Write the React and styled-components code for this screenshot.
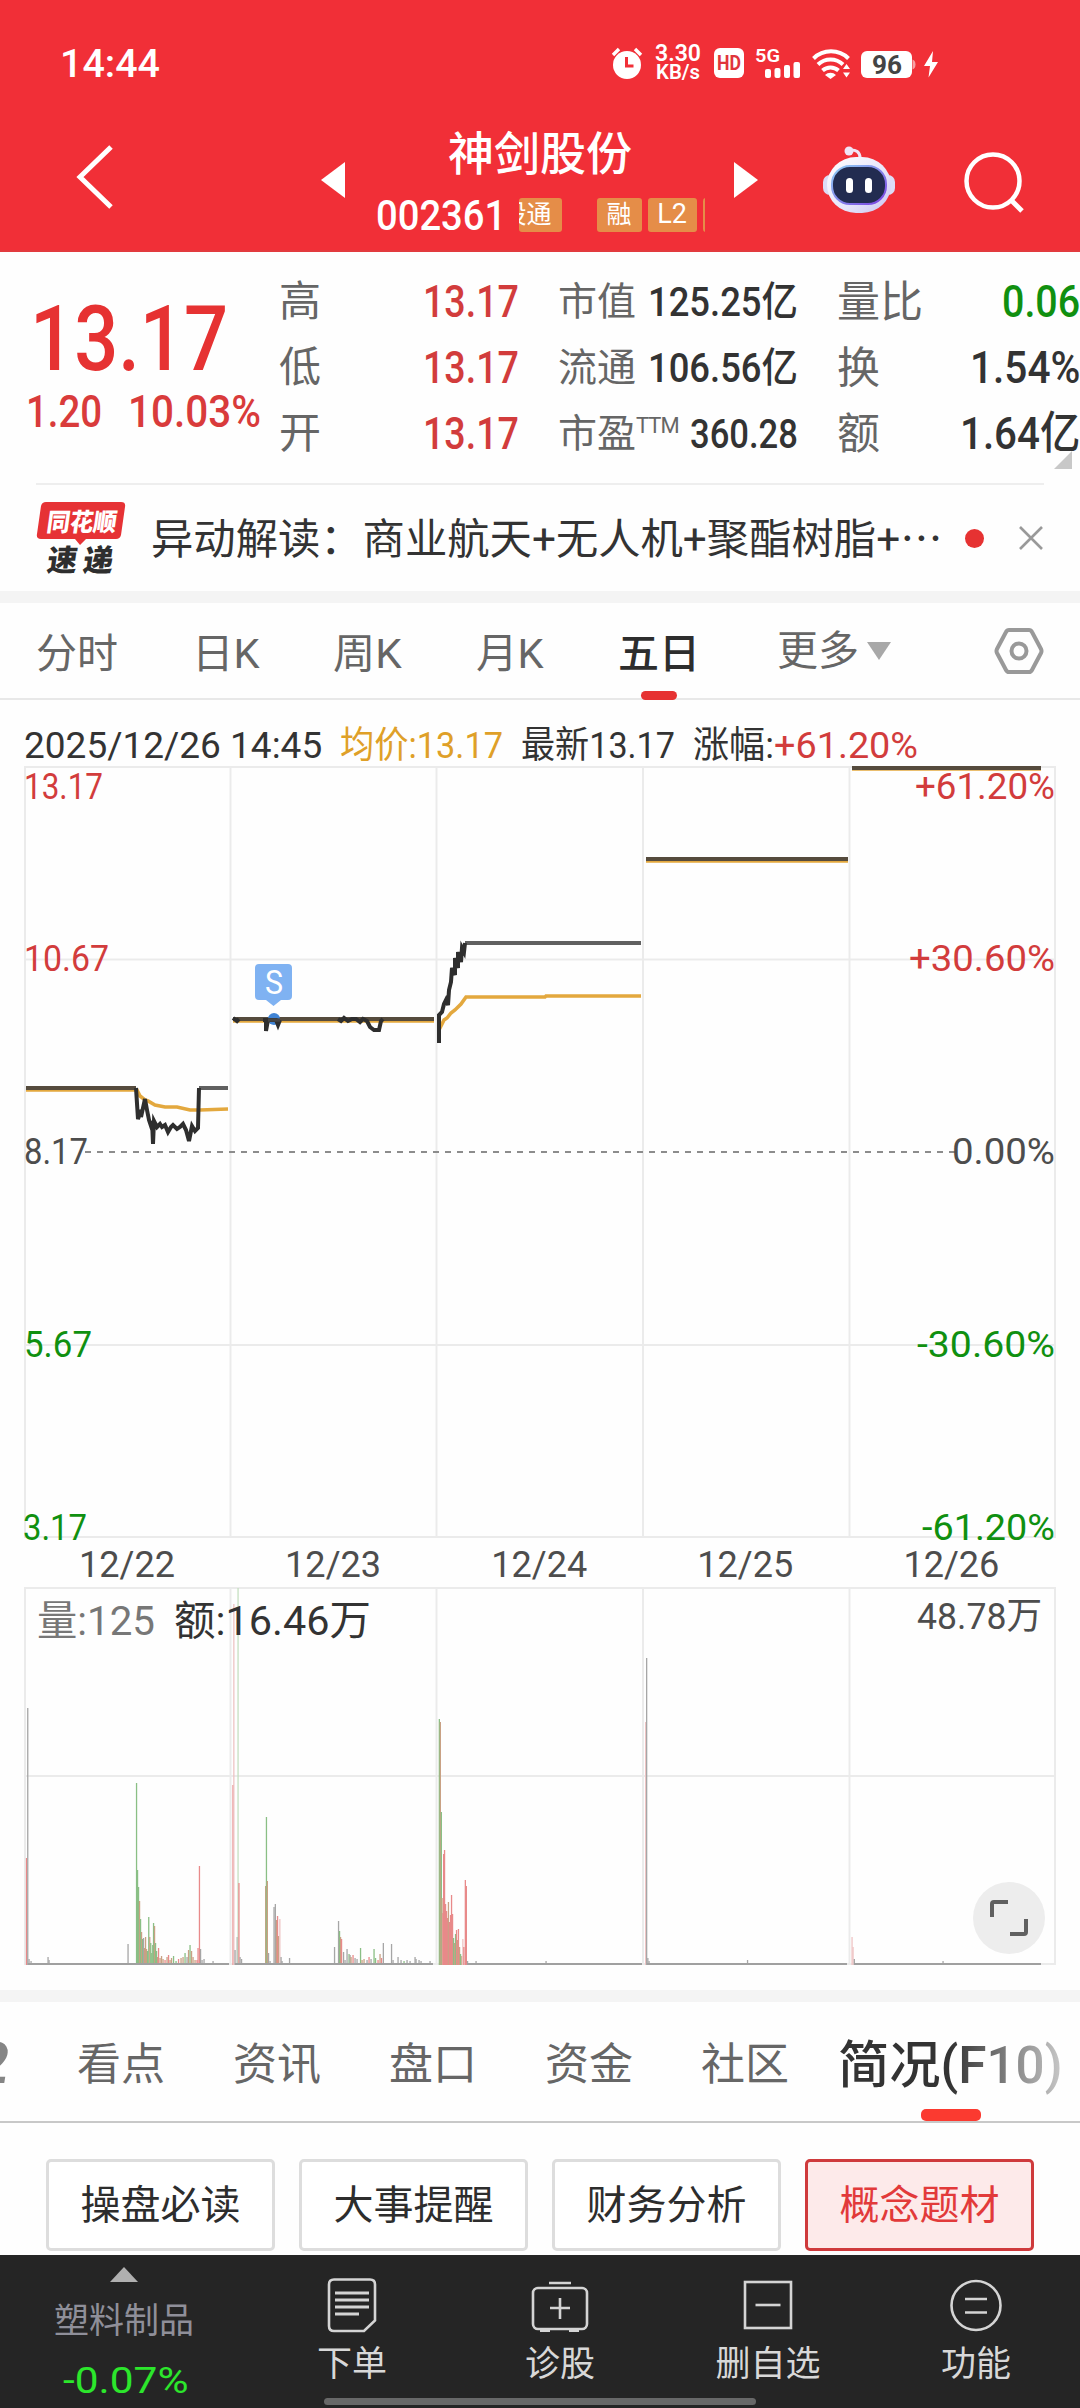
import React, {useState, useLayoutEffect, useRef} from 'react'
import styled, {createGlobalStyle} from 'styled-components';

const GlobalStyle = createGlobalStyle`
    body {
        margin: 0;
        background: #fff;
    }
    * {
        box-sizing: border-box;
    }
`;

const Page = styled.div`
    width: 1080px;
    height: 2408px;
    overflow: hidden;
    display: flex;
    flex-direction: column;
    font-family: Roboto, 'Noto Sans CJK SC', sans-serif;
    color: #333;
    background: #fefefe;
`;

const FitBox = styled.span`
    display: inline-block;
    flex: none;
    white-space: nowrap;
`;

const FitText = styled.span`
    display: inline-block;
    transform-origin: left center;
`;

// squeezes a text to a given width, the numbers use a narrow face
function Fit({ w, children }) {
    const ref = useRef(null);
    const [scale, setScale] = useState(1);

    useLayoutEffect(() => {
        setScale(w / ref.current.offsetWidth);
    }, [w, children])

    return (
        <FitBox style={{ width: w }}>
            <FitText ref={ref} style={{ transform: `scaleX(${scale})` }}>{children}</FitText>
        </FitBox>
    )
}

/* ---------- header ---------- */

const Header = styled.header`
    height: 252px;
    flex: none;
    background: #f12f37;
    border-bottom: 2px solid #e23a3e;
    color: #fff;
`;

const StatusBar = styled.div`
    height: 126px;
    padding: 0 140px 0 60px;
    display: flex;
    align-items: center;
    justify-content: space-between;
`;

const Clock = styled.div`
    font-size: 39px;
    font-weight: 500;
    line-height: 46px;
    padding-top: 2px;
`;

const StatusIcons = styled.svg`
    width: 332px;
    height: 44px;
    margin-bottom: 2px;
`;

const NavBar = styled.div`
    height: 124px;
    display: flex;
    align-items: center;
    padding-left: 73px;
`;

const NavIcon = styled.svg`
    flex: none;
    width: ${p => p.$w}px;
    height: ${p => p.$h}px;
    margin-left: ${p => p.$ml || 0}px;
    margin-top: ${p => p.$mt || 0}px;
`;

const TitleBlock = styled.div`
    width: 390px;
    height: 124px;
    display: flex;
    flex-direction: column;
    align-items: center;
`;

const StockName = styled.div`
    font-size: 46px;
    font-weight: 500;
    line-height: 56px;
    height: 66px;
`;

const CodeRow = styled.div`
    display: flex;
    align-items: center;
    gap: 13px;
    height: 48px;
    font-size: 42px;
    font-weight: 500;
    line-height: 48px;
`;

const TagStrip = styled.div`
    width: 186px;
    height: 34px;
    margin-bottom: 2px;
    display: flex;
    gap: 6px;
    overflow: hidden;
    justify-content: flex-start;
`;

const Tag = styled.span`
    flex: none;
    width: ${p => p.$w}px;
    height: 34px;
    margin-left: ${p => p.$ml || 0}px;
    padding-right: ${p => p.$pr || 0}px;
    border-radius: 3px;
    background: #e58d48;
    font-size: ${p => p.$size || 25}px;
    font-weight: 400;
    line-height: 33px;
    white-space: nowrap;
    display: flex;
    justify-content: ${p => p.$pr ? 'flex-end' : 'center'};
`;

/* ---------- quote ---------- */

const Quote = styled.section`
    flex: none;
    height: 231px;
    padding-top: 17px;
    display: grid;
    grid-template-columns: 240px 240px 240px 243px;
    column-gap: 39px;
    position: relative;
`;

const PriceBlock = styled.div`
    padding: 28px 0 0 26px;
    color: #d93b3b;
    font-weight: 500;
    white-space: nowrap;
`;

const Price = styled.div`
    padding-left: 4px;
    height: 83px;
    font-size: 91px;
    line-height: 84px;
    color: #e63232;
`;

const Change = styled.div`
    display: flex;
    gap: 26px;
    height: 64px;
    font-size: 45px;
    line-height: 64px;
`;

const QuoteCol = styled.div`
    display: flex;
    flex-direction: column;
`;

const QuoteItem = styled.div`
    height: 66px;
    display: flex;
    justify-content: space-between;
    align-items: center;
    line-height: 66px;
    color: #666;
    font-size: ${p => p.$label}px;
    white-space: nowrap;
`;

const Value = styled.span`
    font-size: ${p => p.$size}px;
    font-weight: 500;
    color: ${p => p.$color};
`;

const Sup = styled.sup`
    font-size: 22px;
    line-height: 0;
    letter-spacing: -1px;
    vertical-align: 14px;
`;

const Corner = styled.i`
    position: absolute;
    right: 8px;
    bottom: 14px;
    border-left: 18px solid transparent;
    border-bottom: 18px solid #c8c8c8;
`;

const News = styled.section`
    flex: none;
    height: 108px;
    margin: 0 36px;
    border-top: 2px solid #eee;
    display: flex;
    align-items: center;
`;

const NewsLogo = styled.svg`
    flex: none;
    width: 92px;
    height: 76px;
`;

const NewsText = styled.div`
    width: 793px;
    margin-left: 23px;
    font-size: 42px;
    line-height: 60px;
`;

const Dots = styled.span`
    font-family: 'Noto Sans CJK SC', sans-serif;
`;

const RedDot = styled.i`
    width: 19px;
    height: 19px;
    margin-left: 21px;
    border-radius: 50%;
    background: #e63232;
`;

const Band = styled.div`
    flex: none;
    height: 12px;
    background: #f4f4f4;
`;

/* ---------- chart ---------- */

const PeriodTabs = styled.nav`
    flex: none;
    height: 97px;
    padding: 0 36px;
    border-bottom: 2px solid #e8e8e8;
    display: flex;
`;

const PeriodTab = styled.div`
    position: relative;
    height: 97px;
    line-height: 102px;
    margin-right: ${p => p.$gap}px;
    font-size: 41px;
    white-space: nowrap;
    color: ${p => p.$on ? '#2d2d2d' : '#666'};
    font-weight: ${p => p.$on ? 500 : 400};
`;

const Underline = styled.i`
    position: absolute;
    left: 50%;
    bottom: ${p => p.$b}px;
    width: ${p => p.$w}px;
    height: ${p => p.$h}px;
    margin-left: ${p => -p.$w / 2}px;
    border-radius: 5px;
    background: ${p => p.$color};
`;

const More = styled.div`
    display: flex;
    align-items: center;
    gap: 8px;
    width: 218px;
    font-size: 41px;
    line-height: 102px;
    color: #666;
`;

const Down = styled.i`
    border: 12px solid transparent;
    border-top: 18px solid #a8a8a8;
    border-bottom: 0;
`;

const ChartInfo = styled.div`
    flex: none;
    height: 60px;
    padding: 16px 0 0 24px;
    display: flex;
    font-size: 37px;
    line-height: 60px;
    white-space: nowrap;
`;

const InfoPart = styled.span`
    margin-right: ${p => p.$gap || 0}px;
    color: ${p => p.$color || '#333'};
`;

const Chart = styled.svg`
    flex: none;
    display: block;
    width: 1080px;
    height: 1230px;
`;

/* ---------- bottom ---------- */

const SectionTabs = styled.nav`
    flex: none;
    height: 121px;
    border-bottom: 2px solid #c8c8c8;
    display: flex;
    position: relative;
`;

const Cut = styled.div`
    width: 9px;
    margin-right: 68px;
    display: flex;
    justify-content: flex-end;
    font-size: 58px;
    font-style: italic;
    font-weight: 700;
    line-height: 122px;
    color: #858585;
`;

const SectionTab = styled.div`
    width: 156px;
    font-size: 44px;
    line-height: 126px;
    color: #666;
`;

const ActiveTab = styled.div`
    position: relative;
    margin-left: -19px;
    font-size: 51px;
    font-weight: 500;
    line-height: 127px;
`;

const Fade = styled.div`
    position: absolute;
    right: 0;
    top: 0;
    width: 130px;
    height: 104px;
    background: linear-gradient(to right, rgba(254, 254, 254, 0), rgba(254, 254, 254, .85));
`;

const Chips = styled.div`
    flex: none;
    height: 132px;
    padding: 36px 46px 0;
    display: flex;
    justify-content: space-between;
`;

const Chip = styled.div`
    width: 229px;
    height: 92px;
    border: 3px solid ${p => p.$on ? '#cf3a3c' : '#ddd'};
    border-radius: 5px;
    background: ${p => p.$on ? '#fdeaea' : '#fff'};
    color: ${p => p.$on ? '#e23a3a' : '#2d2d2d'};
    font-size: 40px;
    line-height: 87px;
    text-align: center;
`;

const ToolBar = styled.footer`
    position: relative;
    flex: none;
    height: 153px;
    padding-left: 20px;
    background: #252525;
    display: flex;
    color: #d8d8d8;
    font-size: 35px;
`;

const Sector = styled.div`
    width: 208px;
    display: flex;
    flex-direction: column;
    align-items: center;
    color: #8f8f99;
    line-height: 50px;
`;

const Up = styled.i`
    border: 14px solid transparent;
    border-bottom: 15px solid #b0b0b0;
    border-top: 0;
    margin: 12px 0 15px;
`;

const SectorRate = styled.div`
    margin: 9px 0 0 2px;
    font-size: 37px;
    line-height: 50px;
    color: #2ce62c;
`;

const Tool = styled.div`
    width: 208px;
    margin-left: ${p => p.$ml || 0}px;
    padding-top: 20px;
    display: flex;
    flex-direction: column;
    align-items: center;
    line-height: 50px;
`;

const ToolIcon = styled.svg`
    width: 60px;
    height: 60px;
    margin-bottom: 5px;
    fill: none;
    stroke: #d4d4d4;
    stroke-width: 2.6;
`;

const HomeBar = styled.i`
    position: absolute;
    left: 324px;
    bottom: 3px;
    width: 432px;
    height: 7px;
    border-radius: 4px;
    background: #686868;
`;

const RED = '#d23c3c';
const GREEN = '#109010';

const quoteCols = [
    { label: 42, size: 45, items: [['高', '13.17', 96, RED], ['低', '13.17', 96, RED], ['开', '13.17', 96, RED]] },
    { label: 39, size: 41, items: [['市值', '125.25亿', 150, '#333'], ['流通', '106.56亿', 150, '#333'], ['市盈', '360.28', 108, '#333']] },
    { label: 43, size: 45, items: [['量比', '0.06', 78, GREEN], ['换', '1.54%', 110, '#333'], ['额', '1.64亿', 120, '#333']] },
];

function Status() {
    return (
        <StatusIcons viewBox="0 0 332 44" fill="#fff">
            <circle cx="19" cy="25" r="14" />
            <path d="M5 15l6-6M27 9l6 6" stroke="#fff" strokeWidth="3.4" />
            <path d="M18.500 17v9h7" fill="none" stroke="#f12f37" strokeWidth="3" />
            <text x="47" y="21" fontSize="23" fontWeight="600" textLength="46" lengthAdjust="spacingAndGlyphs">3.30</text>
            <text x="48" y="39" fontSize="20" fontWeight="600" textLength="44" lengthAdjust="spacingAndGlyphs">KB/s</text>
            <rect x="106" y="8" width="30" height="30" rx="6" />
            <text x="109" y="30" fontSize="20" fontWeight="700" fill="#e0353b" textLength="24" lengthAdjust="spacingAndGlyphs">HD</text>
            <text x="147" y="22" fontSize="19" fontWeight="600" textLength="25" lengthAdjust="spacingAndGlyphs">5G</text>
            <rect x="157" y="29" width="6" height="9" rx="2" />
            <rect x="166.500" y="28" width="6" height="10" rx="2" />
            <rect x="176" y="25" width="6" height="13" rx="2" />
            <rect x="185.500" y="22" width="6.500" height="16" rx="2" />
            <path d="M205.500 18.500a25 25 0 0 1 35 0M210 24.500a18 18 0 0 1 25 0M214.500 30.500a12 12 0 0 1 16 0" fill="none" stroke="#fff" strokeWidth="4" />
            <path d="M217 35a8 8 0 0 1 11 0l-5.500 4zM235 29l3.500-5 3.500 5zM235 32.500l3.500 5 3.500-5z" />
            <rect x="253" y="11" width="51" height="27" rx="6" />
            <path d="M304.500 19.500q3 1 3 5t-3 5z" fill="#f8a0a4" />
            <text x="264" y="33.500" fontSize="25" fontWeight="700" fill="#444" textLength="30" lengthAdjust="spacingAndGlyphs">96</text>
            <path d="M325 11l-9 15h6l-1.500 11.500L330 22h-6z" />
        </StatusIcons>
    )
}

function Robot() {
    return (
        <NavIcon viewBox="0 0 76 70" $w={76} $h={70} $ml={63} $mt={-16}>
            <defs>
                <linearGradient id="head" x1="0" y1="0" x2="1" y2="1">
                    <stop offset="0" stopColor="#fff" />
                    <stop offset=".6" stopColor="#e6e4fa" />
                    <stop offset="1" stopColor="#c9c3f0" />
                </linearGradient>
                <linearGradient id="rim" x1="0" y1="0" x2="1" y2="1">
                    <stop offset="0" stopColor="#8fd0f5" />
                    <stop offset="1" stopColor="#7a3fe0" />
                </linearGradient>
            </defs>
            <circle cx="28" cy="6" r="4.500" fill="#f0e4f6" />
            <path d="M28 5q11-1 11 8" fill="none" stroke="#f0e4f6" strokeWidth="3" />
            <rect x="2" y="30" width="72" height="20" rx="7" fill="#dcdcf6" />
            <rect x="6" y="12" width="64" height="56" rx="29" fill="url(#head)" />
            <rect x="11" y="21" width="54" height="38" rx="18" fill="#222c50" stroke="url(#rim)" strokeWidth="2" />
            <rect x="25" y="33" width="7" height="15" rx="3.500" fill="#fff" />
            <rect x="44" y="33" width="7" height="15" rx="3.500" fill="#fff" />
        </NavIcon>
    )
}

const days = ['12/22', '12/23', '12/24', '12/25', '12/26'];
const cols = [230.5, 436.5, 643, 849.5];

// price line of each day
const prices = [
    '136,1088 138,1119 141,1110 141,1117 143,1108 145,1099 147,1110 149,1120 151,1126 152,1121 153,1144 154,1121 157,1127 160,1124 162,1127 165,1125 168,1132 171,1127 173,1125 177,1129 180,1127 183,1124 186,1130 189,1141 192,1126 195,1131 198,1128 199,1088',
    '233,1018 237,1021 239,1019',
    '263,1020 266,1020 266,1031 268,1020 276,1020 278,1025 280,1020',
    '338,1019 341,1021 344,1018 348,1021 352,1019 356,1019 360,1022 363,1019 367,1021 370,1027 374,1030 379,1030 381,1021 383,1019',
    '439,1043 439,1015 442,1012 444,1004 446,1000 448,1005 449,990 451,982 452,968 455,975 455,958 458,968 458,952 461,962 462,948 464,952 465,943',
];

const averages = [
    '26,1090 137,1090 140,1096 145,1100 148,1101 155,1105 165,1107 177,1107 190,1110 200,1110 228,1109',
    '233,1021 434,1021',
    '439,1020 440,1028 444,1020 447,1018 451,1013 455,1010 461,1004 466,997 545,997 546,996 641,996',
    '646,861 848,861',
    '852,769 1041,769',
];

const flats = [[26, 136, 1088], [199, 228, 1088], [233, 434, 1019], [465, 641, 943], [646, 848, 859], [852, 1041, 768]];

// x, top, colour
const R = '#e88a8a', G = '#8abf85', K = '#a6a6a6', B = '#c9a184', P = '#eec4c4';
const bars = [
    [26.5, 1858, R], [27.7, 1708, K], [29, 1959, K], [31, 1961, K], [48, 1957, K], [49, 1960, K],
    [128, 1944, K], [136.5, 1783, G], [137.5, 1870, G], [138.5, 1887, G], [139.5, 1901, B], [140.5, 1919, G], [141.5, 1932, B],
    [142.5, 1939, G], [143.5, 1938, K], [144.5, 1948, B], [145.5, 1937, B], [146.5, 1949, B], [147.5, 1951, G], [148.7, 1917, G],
    [149.7, 1937, B], [150.7, 1943, G], [151.7, 1953, G], [152.7, 1945, G], [153.5, 1923, G], [154.5, 1926, B], [155.5, 1943, G],
    [156.5, 1951, G], [157.5, 1957, B], [158.5, 1948, R], [160, 1958, B], [161.5, 1956, B], [163, 1959, B], [165, 1960, R],
    [167, 1957, B], [168.5, 1955, R], [170, 1960, B], [171.5, 1958, B], [173.5, 1956, G], [176, 1961, G], [178.5, 1959, R],
    [181, 1958, B], [183, 1957, B], [185, 1953, G], [187, 1957, K], [188.5, 1950, B], [190, 1945, G], [191.5, 1951, B],
    [193, 1957, B], [195, 1960, B], [197, 1960, R], [198, 1948, R], [199.4, 1866, R], [200.5, 1949, K], [202, 1960, K], [204, 1959, K], [213, 1961, K],
    [233, 1785, R], [233.8, 1604, P], [235, 1950, K], [237.2, 1937, K], [238, 1588, '#c5dfc0'], [238.9, 1883, R], [240, 1957, K], [241.5, 1959, K],
    [265.6, 1886, B], [266.4, 1817, G], [267.3, 1881, B], [268.5, 1953, K], [270, 1961, K],
    [274, 1907, K], [275.3, 1904, K], [276.5, 1920, B], [277.5, 1916, R], [278.5, 1936, B], [279.8, 1919, P], [281, 1957, K], [282, 1961, K],
    [289.5, 1958, K], [334.5, 1947, K], [338.5, 1921, K], [339.5, 1931, G], [340.5, 1937, B], [341.5, 1939, R], [343.5, 1952, K],
    [345, 1960, K], [347, 1949, K], [349, 1954, G], [350, 1955, K], [351, 1957, B], [353, 1955, R], [355, 1958, K], [357, 1959, K],
    [360.5, 1948, G], [362, 1960, B], [364, 1959, B], [367, 1960, K], [369, 1957, R], [371, 1959, K], [374, 1949, G], [375.5, 1958, G],
    [378, 1960, R], [380, 1954, B], [381.5, 1958, R], [383.3, 1943, K], [391.5, 1944, K], [393, 1960, K], [398, 1957, K],
    [401, 1960, K], [404, 1961, G], [407, 1960, K], [410, 1961, K], [415, 1957, K], [416, 1959, K], [419, 1960, K], [421, 1961, K], [430, 1961, K],
    [439.3, 1719, G], [440.3, 1722, B], [441.3, 1812, G], [442, 1898, B], [442.9, 1913, R], [443.6, 1854, R], [444.5, 1850, R],
    [445.5, 1904, R], [446.5, 1911, R], [447.5, 1918, R], [448.4, 1902, B], [449.4, 1922, R], [450.5, 1915, R], [451.5, 1895, R],
    [452.5, 1914, R], [453.5, 1938, G], [454.5, 1943, B], [455.5, 1934, G], [456.5, 1930, R], [457.5, 1940, B], [458.4, 1929, R],
    [459.5, 1947, B], [460.5, 1954, G], [461.8, 1956, B], [462.8, 1939, P], [463.8, 1947, R], [465.3, 1880, R], [466.3, 1886, R], [467.5, 1961, K],
    [476, 1961, K], [546, 1961, K], [645.6, 1722, P], [646.6, 1658, K], [647.8, 1958, K], [649, 1961, K], [747.5, 1960, K],
    [852, 1937, P], [853, 1947, P], [854.3, 1959, K], [943, 1961, K],
];

function StockChart() {
    const label = (x, y, text, fill, w, size = 37, anchor) => (
        <text key={text + y} x={x} y={y} fill={fill} fontSize={size} textAnchor={anchor}
            textLength={w} lengthAdjust="spacingAndGlyphs">{text}</text>
    )

    return (
        <Chart viewBox="0 760 1080 1230">
            <g fill="none" stroke="#ebebeb" strokeWidth="2">
                <rect x="25" y="767" width="1030" height="770" />
                <path d="M25 959.500H1055M25 1345H1055" />
                <rect x="25" y="1588" width="1030" height="376" />
                <path d="M25 1776H1055" />
                {cols.map(x => <path key={x} d={`M${x} 767V1537M${x} 1588V1964`} />)}
            </g>
            <path d="M85 1152H955" stroke="#8c8c8c" strokeWidth="2" strokeDasharray="6 6" />

            {averages.map(line => <polyline key={line} points={line} fill="none" stroke="#e3a83e" strokeWidth="3.6" />)}
            {flats.map(([a, b, y]) => (
                <path key={a} d={`M${a} ${y}H${b}`} stroke={a === 199 || a === 465 ? '#606060' : '#554b3d'} strokeWidth="4" />
            ))}
            <circle cx="274" cy="1019" r="6" fill="#3f83d4" />
            {prices.map(line => <polyline key={line} points={line} fill="none" stroke="#2e2e2e" strokeWidth="4" />)}
            <path d="M268 1020H280" stroke="#444" strokeWidth="3.4" />

            <path d="M259 964h29q4 0 4 4v28q0 4-4 4h-7l-7.500 6-7.500-6h-7q-4 0-4-4v-28q0-4 4-4z" fill="#7fb2f2" />
            {label(265, 994, 'S', '#fff', 18, 33)}

            {label(24, 799, '13.17', RED, 79)}
            {label(24, 971, '10.67', RED, 85)}
            {label(24, 1164, '8.17', '#4d4d4d', 64)}
            {label(24, 1357, '5.67', GREEN, 68)}
            {label(23, 1540, '3.17', GREEN, 64)}
            {label(1055, 799, '+61.20%', RED, 140, 37, 'end')}
            {label(1055, 971, '+30.60%', RED, 146, 37, 'end')}
            {label(1055, 1164, '0.00%', '#4d4d4d', 103, 37, 'end')}
            {label(1055, 1357, '-30.60%', GREEN, 138, 37, 'end')}
            {label(1055, 1540, '-61.20%', GREEN, 133, 37, 'end')}
            {days.map((day, i) => label(79 + i * 206.1, 1577, day, '#4d4d4d', 96))}

            {bars.map(([x, top, fill], i) => (
                <rect key={i} x={x - .6} y={top} width="1.300" height={1965 - top} fill={fill} />
            ))}
            <path d="M28 1964H229M235 1964H433M467 1964H642M647 1964H847M854 1964H1041" stroke="#a0a0a0" strokeWidth="2" />

            {label(37, 1635, '量:125', '#777', 118, 41)}
            {label(174, 1635, '额:16.46万', '#333', 197, 41)}
            {label(1042, 1629, '48.78万', '#4d4d4d', 125, 37, 'end')}

            <circle cx="1009" cy="1918" r="36" fill="#ededed" />
            <path d="M992 1917v-13q0-2 2-2h14M1026 1919v13q0 2-2 2h-14" fill="none" stroke="#606060" strokeWidth="4" />
        </Chart>
    )
}

function App() {
    return (
        <Page>
            <GlobalStyle />
            <Header>
                <StatusBar>
                    <Clock><Fit w={100}>14:44</Fit></Clock>
                    <Status />
                </StatusBar>
                <NavBar>
                    <NavIcon viewBox="0 0 44 66" $w={44} $h={66} $mt={-22}>
                        <path d="M38 3L7 33l31 30" fill="none" stroke="#fff" strokeWidth="5" />
                    </NavIcon>
                    <NavIcon viewBox="0 0 24 36" $w={24} $h={36} $ml={204} $mt={-16}>
                        <path d="M24 0v36L0 18z" fill="#fff" />
                    </NavIcon>
                    <TitleBlock>
                        <StockName>神剑股份</StockName>
                        <CodeRow>
                            <Fit w={130}>002361</Fit>
                            <TagStrip>
                                <Tag $w={43} $pr={10}>股通</Tag>
                                <Tag $w={45} $ml={29}>融</Tag>
                                <Tag $w={49} $size={27}>L2</Tag>
                                <Tag $w={20} />
                            </TagStrip>
                        </CodeRow>
                    </TitleBlock>
                    <NavIcon viewBox="0 0 24 36" $w={24} $h={36} $ml={-1} $mt={-16}>
                        <path d="M0 0v36l24-18z" fill="#fff" />
                    </NavIcon>
                    <Robot />
                    <NavIcon viewBox="0 0 64 64" $w={64} $h={64} $ml={65} $mt={-12}>
                        <circle cx="31" cy="31" r="26.500" fill="none" stroke="#fff" strokeWidth="4.500" />
                        <path d="M49 50l11 11" stroke="#fff" strokeWidth="5" />
                    </NavIcon>
                </NavBar>
            </Header>

            <Quote>
                <PriceBlock>
                    <Price><Fit w={198}>13.17</Fit></Price>
                    <Change><Fit w={76}>1.20</Fit><Fit w={133}>10.03%</Fit></Change>
                </PriceBlock>
                {quoteCols.map(col => (
                    <QuoteCol key={col.label}>
                        {col.items.map(([name, value, w, color]) => (
                            <QuoteItem key={name} $label={col.label}>
                                <span>{name}{name === '市盈' && <Sup>TTM</Sup>}</span>
                                <Value $size={col.size} $color={color}><Fit w={w}>{value}</Fit></Value>
                            </QuoteItem>
                        ))}
                    </QuoteCol>
                ))}
                <Corner />
            </Quote>

            <News>
                <NewsLogo viewBox="0 0 92 76">
                    <path d="M10 2h75q5 0 4 5l-4 28q-1 4-5 4H50l-6 6-5-6H5q-5 0-4-5l4-28q1-4 5-4z" fill="#e63235" />
                    <g fontWeight="900" transform="skewX(-8)">
                        <text x="14" y="31" fontSize="25" fill="#fff" textLength="70" lengthAdjust="spacingAndGlyphs">同花顺</text>
                        <text x="20" y="71" fontSize="30" fill="#2e2e2e" textLength="66">速递</text>
                    </g>
                </NewsLogo>
                <NewsText><Fit w={792}>异动解读：商业航天+无人机+聚酯树脂+<Dots>…</Dots></Fit></NewsText>
                <RedDot />
                <NavIcon viewBox="0 0 24 24" $w={24} $h={24} $ml={35}>
                    <path d="M1 1l22 22M23 1L1 23" stroke="#999" strokeWidth="2.600" />
                </NavIcon>
            </News>
            <Band />

            <PeriodTabs>
                <PeriodTab $gap={74}>分时</PeriodTab>
                <PeriodTab $gap={73}><Fit w={68}>日K</Fit></PeriodTab>
                <PeriodTab $gap={74}><Fit w={69}>周K</Fit></PeriodTab>
                <PeriodTab $gap={74}><Fit w={68}>月K</Fit></PeriodTab>
                <PeriodTab $gap={77} $on>五日<Underline $w={36} $h={9} $b={0} $color="#e63232" /></PeriodTab>
                <More>更多<Down /></More>
                <NavIcon viewBox="0 0 50 48" $w={50} $h={48} $mt={24}>
                    <path d="M15 3h20q2 0 3 2l9 17q1 2 0 4l-9 17q-1 2-3 2H15q-2 0-3-2L3 26q-1-2 0-4l9-17q1-2 3-2z" fill="none" stroke="#999" strokeWidth="4" />
                    <circle cx="25" cy="24" r="7.500" fill="none" stroke="#999" strokeWidth="4" />
                </NavIcon>
            </PeriodTabs>

            <ChartInfo>
                <InfoPart $gap={18}><Fit w={298}>2025/12/26 14:45</Fit></InfoPart>
                <InfoPart $gap={18} $color="#dfa028"><Fit w={163}>均价:13.17</Fit></InfoPart>
                <InfoPart $gap={18}><Fit w={154}>最新13.17</Fit></InfoPart>
                <InfoPart><Fit w={81}>涨幅:</Fit></InfoPart>
                <InfoPart $color={RED}><Fit w={144}>+61.20%</Fit></InfoPart>
            </ChartInfo>
            <StockChart />
            <Band />

            <SectionTabs>
                <Cut>2</Cut>
                {['看点', '资讯', '盘口', '资金', '社区'].map(name => <SectionTab key={name}>{name}</SectionTab>)}
                <ActiveTab>
                    <Fit w={225}>简况(F10)</Fit>
                    <Underline $w={60} $h={12} $b={0} $color="#fb3a30" />
                </ActiveTab>
                <Fade />
            </SectionTabs>

            <Chips>
                <Chip>操盘必读</Chip>
                <Chip>大事提醒</Chip>
                <Chip>财务分析</Chip>
                <Chip $on>概念题材</Chip>
            </Chips>

            <ToolBar>
                <Sector>
                    <Up />
                    <div>塑料制品</div>
                    <SectorRate><Fit w={125}>-0.07%</Fit></SectorRate>
                </Sector>
                <Tool $ml={20}>
                    <ToolIcon viewBox="0 0 60 60">
                        <path d="M12 4.500h36q5 0 5 5v36L42 56H12q-5 0-5-5V9.500q0-5 5-5z" />
                        <path d="M13 18h34M13 25h34M13 32h34M13 39h24" strokeWidth="3" />
                    </ToolIcon>
                    下单
                </Tool>
                <Tool>
                    <ToolIcon viewBox="0 0 60 60">
                        <rect x="3" y="13" width="54" height="41" rx="5" />
                        <path d="M19 8h22M30 23v21M20 33h20" />
                        <path d="M10 55h10M39 55h10" strokeWidth="4" />
                    </ToolIcon>
                    诊股
                </Tool>
                <Tool>
                    <ToolIcon viewBox="0 0 60 60">
                        <rect x="7" y="7" width="46" height="46" />
                        <path d="M17.500 30h25" />
                    </ToolIcon>
                    删自选
                </Tool>
                <Tool>
                    <ToolIcon viewBox="0 0 60 60">
                        <circle cx="30" cy="30.500" r="24.500" />
                        <path d="M19 24h22M19 37.500h22" />
                    </ToolIcon>
                    功能
                </Tool>
                <HomeBar />
            </ToolBar>
        </Page>
    )
}

export default App;
